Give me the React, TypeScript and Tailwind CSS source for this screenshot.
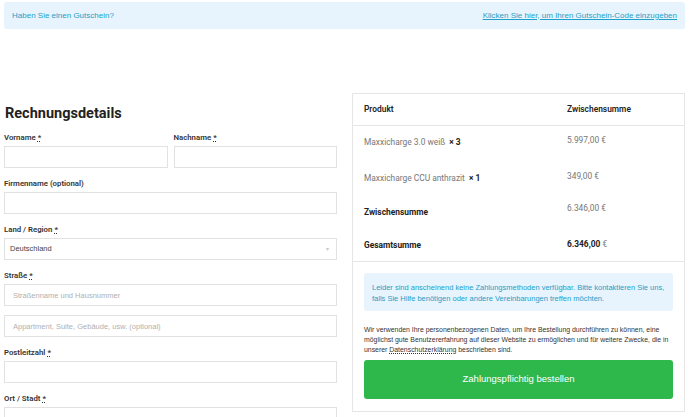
import React from 'react';

const din = { fontFamily: 'Roboto, "Liberation Sans", sans-serif' };
const arial = { fontFamily: '"Liberation Sans", Arial, sans-serif' };

const Label: React.FC<{ text: string; required?: boolean }> = ({ text, required }) => (
  <div className="h-[12px] leading-[12px] mb-[2px] text-[7.8px] font-semibold text-[#333]" style={din}>
    {text}
    {required && <span className="ml-[2px] underline decoration-dotted">*</span>}
  </div>
);

const Field: React.FC<{ placeholder?: string }> = ({ placeholder }) => (
  <input
    readOnly
    placeholder={placeholder}
    className="block w-full h-[22px] border border-[#e2e2e2] bg-white pl-[8px] text-[7.5px] text-[#333] placeholder:text-[#b0b0b0] outline-none"
    style={arial}
  />
);

export default function App() {
  return (
    <div className="w-[690px] h-[417px] overflow-hidden bg-white pl-[4px] pr-[5px] pt-[2px]">
      {/* coupon banner */}
      <div
        className="h-[27px] rounded-[3px] bg-[#e7f4fd] flex items-center justify-between pl-[8px] pr-[8px] text-[8px] text-[#1ea0c9]"
        style={arial}
      >
        <span>Haben Sie einen Gutschein?</span>
        <span className="underline">Klicken Sie hier, um Ihren Gutschein-Code einzugeben</span>
      </div>

      <div className="grid grid-cols-2 gap-[15px] mt-[64px]">
        {/* billing form */}
        <div className="pt-[9px]">
          <h2 className="h-[24px] leading-[24px] text-[14.5px] font-bold text-[#222] pl-[1px]" style={din}>
            Rechnungsdetails
          </h2>
          <div className="mt-[6px] grid grid-cols-2 gap-[6px]">
            <div>
              <Label text="Vorname" required />
              <Field />
            </div>
            <div>
              <Label text="Nachname" required />
              <Field />
            </div>
          </div>
          <div className="mt-[10px]">
            <Label text="Firmenname (optional)" />
            <Field />
          </div>
          <div className="mt-[10px]">
            <Label text="Land / Region" required />
            <div
              className="relative h-[22px] border border-[#e2e2e2] flex items-center pl-[5px] text-[7.5px] text-[#444]"
              style={arial}
            >
              Deutschland
              <span className="absolute right-[7px] top-[6px] text-[6px] text-[#c8c8c8]">▾</span>
            </div>
          </div>
          <div className="mt-[10px]">
            <Label text="Straße" required />
            <Field placeholder="Straßenname und Hausnummer" />
          </div>
          <div className="mt-[9px]">
            <Field placeholder="Appartment, Suite, Gebäude, usw. (optional)" />
          </div>
          <div className="mt-[10px]">
            <Label text="Postleitzahl" required />
            <Field />
          </div>
          <div className="mt-[10px]">
            <Label text="Ort / Stadt" required />
            <Field />
          </div>
        </div>

        {/* order review */}
        <div className="border border-[#e6e6e6] h-[319px]">
          <div className="text-[8.4px] text-[#777]" style={din}>
            <div className="grid grid-cols-[203px_1fr] h-[32px] items-center px-[11px] border-b border-[#e6e6e6] font-semibold text-[#222]">
              <span>Produkt</span>
              <span>Zwischensumme</span>
            </div>
            <div className="grid grid-cols-[203px_1fr] h-[35px] px-[11px] leading-[12px]">
              <span className="pt-[10px]">
                Maxxicharge 3.0 weiß <span className="font-bold text-[#222] ml-[2px]">× 3</span>
              </span>
              <span className="pt-[8px]">5.997,00 €</span>
            </div>
            <div className="grid grid-cols-[203px_1fr] h-[35px] px-[11px] leading-[12px]">
              <span className="pt-[11px]">
                Maxxicharge CCU anthrazit <span className="font-bold text-[#222] ml-[2px]">× 1</span>
              </span>
              <span className="pt-[9px]">349,00 €</span>
            </div>
            <div className="grid grid-cols-[203px_1fr] h-[34px] px-[11px] leading-[12px]">
              <span className="pt-[10px] font-bold text-[#222]">Zwischensumme</span>
              <span className="pt-[6px]">6.346,00 €</span>
            </div>
            <div className="grid grid-cols-[203px_1fr] h-[32px] px-[11px] leading-[12px] border-b border-[#e6e6e6]">
              <span className="pt-[9px] font-bold text-[#222]">Gesamtsumme</span>
              <span className="pt-[8px]">
                <span className="font-bold text-[#222]">6.346,00</span> €
              </span>
            </div>
          </div>

          <div className="px-[11px]">
            <div
              className="mt-[11px] rounded-[3px] bg-[#e7f4fd] pl-[8px] pr-[2px] pt-[8.5px] pb-[7px] text-[7.5px] leading-[11px] text-[#1ea0c9]"
              style={arial}
            >
              Leider sind anscheinend keine Zahlungsmethoden verfügbar. Bitte kontaktieren Sie uns, falls Sie Hilfe
              benötigen oder andere Vereinbarungen treffen möchten.
            </div>
            <p className="mt-[14px] text-[6.9px] leading-[10px] text-[#333]" style={arial}>
              Wir verwenden Ihre personenbezogenen Daten, um Ihre Bestellung durchführen zu können, eine möglichst gute
              Benutzererfahrung auf dieser Website zu ermöglichen und für weitere Zwecke, die in unserer{' '}
              <span className="underline decoration-dotted">Datenschutzerklärung</span> beschrieben sind.
            </p>
            <button
              className="mt-[5px] w-full h-[39px] rounded-[3px] bg-[#2eb84c] text-white text-[9.5px]"
              style={arial}
            >
              Zahlungspflichtig bestellen
            </button>
          </div>
        </div>
      </div>
    </div>
  );
}
